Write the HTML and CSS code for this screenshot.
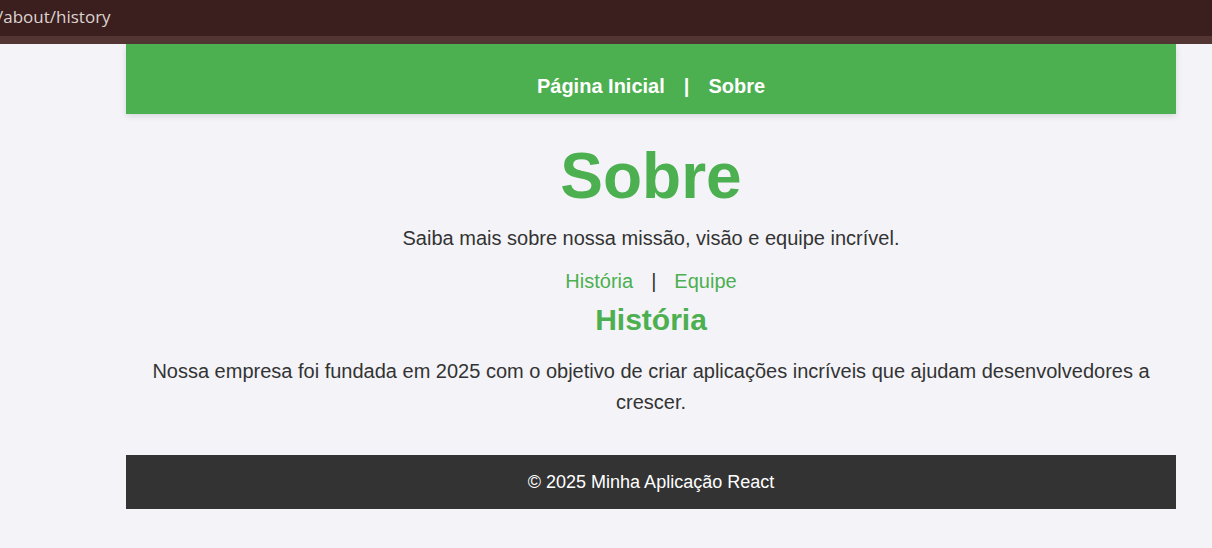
FILE: index.html
```html
<!DOCTYPE html>
<html lang="pt-BR">
<head>
<meta charset="utf-8">
<title>Sobre</title>
<link rel="stylesheet" href="styles.css">
</head>
<body>
<div class="urlbar"><span class="url">/about/history</span></div>
<div class="strip"></div>
<div class="page">
  <div class="app">
    <header class="header">
      <nav class="nav">
        <a class="nav-link" href="#">Página Inicial</a>
        <span class="sep">|</span>
        <a class="nav-link" href="#">Sobre</a>
      </nav>
    </header>
    <main class="main">
      <h1 class="title">Sobre</h1>
      <p class="lead">Saiba mais sobre nossa missão, visão e equipe incrível.</p>
      <nav class="subnav">
        <a class="sub-link" href="#">História</a>
        <span class="sub-sep">|</span>
        <a class="sub-link" href="#">Equipe</a>
      </nav>
      <h2 class="subtitle">História</h2>
      <p class="text">Nossa empresa foi fundada em 2025 com o objetivo de criar aplicações incríveis que ajudam desenvolvedores a crescer.</p>
    </main>
    <footer class="footer">© 2025 Minha Aplicação React</footer>
  </div>
</div>
</body>
</html>
```
FILE: styles.css
```css
html, body {
  margin: 0;
  padding: 0;
}
body {
  background: #f4f4f8;
  font-family: "Liberation Sans", Arial, sans-serif;
  color: #333;
  height: 548px;
  overflow: hidden;
}
.urlbar {
  height: 36px;
  background: #3b1f1e;
  display: flex;
  align-items: center;
}
.url {
  font-family: "Open Sans", "Noto Sans", sans-serif;
  font-size: 17px;
  color: #ddd3d1;
  margin-left: -3px;
  margin-top: -4px;
}
.strip {
  height: 8px;
  background: #533533;
}
.page {
  padding-left: 126px;
}
.app {
  width: 1050px;
}
.header {
  background: #4caf50;
  height: 70px;
  box-sizing: border-box;
  padding-top: 31px;
  box-shadow: 0 2px 6px rgba(0,0,0,0.12);
  display: flex;
  justify-content: center;
}
.nav {
  display: flex;
  gap: 19px;
  font-size: 20px;
  font-weight: bold;
  line-height: 23px;
  color: #fff;
}
.nav-link {
  color: #fff;
  text-decoration: none;
}
.main {
  display: flex;
  flex-direction: column;
  align-items: center;
  text-align: center;
  padding: 0 20px;
}
.title {
  margin: 25px 0 0;
  font-size: 64px;
  line-height: 74px;
  color: #4caf50;
  font-weight: bold;
}
.lead {
  margin: 13px 0 0;
  font-size: 20px;
  line-height: 24px;
}
.subnav {
  margin-top: 19px;
  display: flex;
  gap: 18px;
  font-size: 20px;
  line-height: 24px;
}
.sub-link {
  color: #4caf50;
  text-decoration: none;
}
.sub-sep {
  color: #333;
}
.subtitle {
  margin: 10px 0 0;
  font-size: 30px;
  line-height: 34px;
  color: #4caf50;
  font-weight: bold;
}
.text {
  margin: 19px 0 0;
  font-size: 20px;
  line-height: 31px;
}
.footer {
  margin-top: 37px;
  background: #333;
  color: #fff;
  height: 54px;
  display: flex;
  align-items: center;
  justify-content: center;
  font-size: 18px;
}
```
